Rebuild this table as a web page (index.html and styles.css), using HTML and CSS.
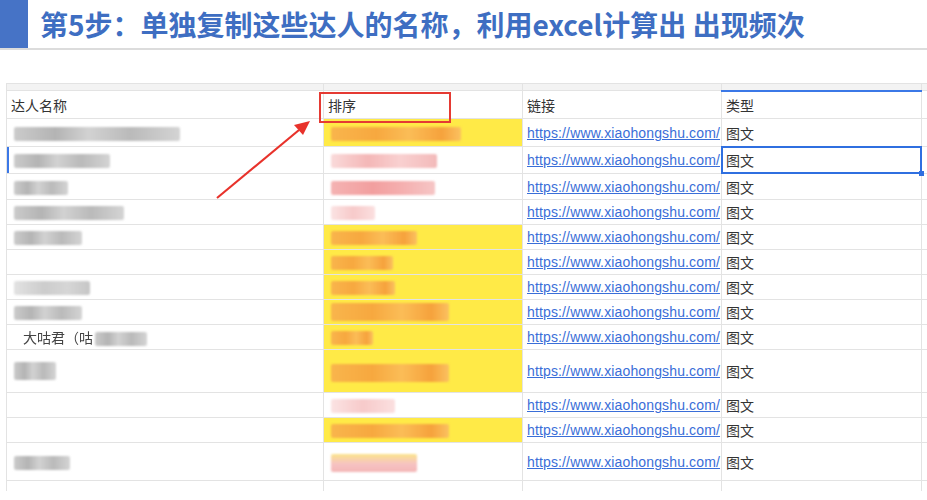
FILE: index.html
```html
<!DOCTYPE html>
<html lang="zh-CN">
<head>
  <meta charset="UTF-8" />
  <meta name="viewport" content="width=device-width, initial-scale=1.0" />
  <title>第5步：统计达人出现频次</title>
  <link rel="stylesheet" href="styles.css">
</head>
<body>
  <header class="title-bar">
    <div class="title-mark"></div>
    <h1 class="title">第5步：单独复制这些达人的名称，利用excel计算出 出现频次</h1>
  </header>

  <div class="sheet">
    <table class="grid">
      <colgroup>
        <col class="c-name"><col class="c-rank"><col class="c-link"><col class="c-type"><col class="c-rest">
      </colgroup>
      <tr class="strip"><td></td><td></td><td></td><td class="sel-col"></td><td></td></tr>
      <tr class="head">
        <td>达人名称</td>
        <td class="rank-head">排序<span class="mark-box"></span></td>
        <td>链接</td>
        <td>类型</td>
        <td></td>
      </tr>
      <tr class="r28">
        <td><span class="blot gray" style="width:166px"></span></td>
        <td class="hl"><span class="blot orange" style="width:130px"></span></td>
        <td class="link"><a href="#">https://www.xiaohongshu.com/</a></td>
        <td>图文</td><td></td>
      </tr>
      <tr class="r27">
        <td class="row-sel"><span class="blot gray" style="width:96px"></span></td>
        <td><span class="blot pink" style="width:106px"></span></td>
        <td class="link"><a href="#">https://www.xiaohongshu.com/</a></td>
        <td class="sel">图文</td><td></td>
      </tr>
      <tr class="r26">
        <td><span class="blot gray" style="width:54px"></span></td>
        <td><span class="blot rose" style="width:104px"></span></td>
        <td class="link"><a href="#">https://www.xiaohongshu.com/</a></td>
        <td>图文</td><td></td>
      </tr>
      <tr class="r25">
        <td><span class="blot gray" style="width:110px"></span></td>
        <td><span class="blot pale" style="width:44px"></span></td>
        <td class="link"><a href="#">https://www.xiaohongshu.com/</a></td>
        <td>图文</td><td></td>
      </tr>
      <tr class="r25">
        <td><span class="blot gray" style="width:68px"></span></td>
        <td class="hl"><span class="blot orange" style="width:86px"></span></td>
        <td class="link"><a href="#">https://www.xiaohongshu.com/</a></td>
        <td>图文</td><td></td>
      </tr>
      <tr class="r25">
        <td></td>
        <td class="hl"><span class="blot orange" style="width:62px"></span></td>
        <td class="link"><a href="#">https://www.xiaohongshu.com/</a></td>
        <td>图文</td><td></td>
      </tr>
      <tr class="r25">
        <td><span class="blot gray light" style="width:76px"></span></td>
        <td class="hl"><span class="blot orange" style="width:64px"></span></td>
        <td class="link"><a href="#">https://www.xiaohongshu.com/</a></td>
        <td>图文</td><td></td>
      </tr>
      <tr class="r25">
        <td><span class="blot gray" style="width:68px"></span></td>
        <td class="hl"><span class="blot orange tall" style="width:118px"></span></td>
        <td class="link"><a href="#">https://www.xiaohongshu.com/</a></td>
        <td>图文</td><td></td>
      </tr>
      <tr class="r25">
        <td><span class="name-text">大咕君（咕</span><span class="blot gray over" style="width:52px"></span></td>
        <td class="hl"><span class="blot orange" style="width:42px"></span></td>
        <td class="link"><a href="#">https://www.xiaohongshu.com/</a></td>
        <td>图文</td><td></td>
      </tr>
      <tr class="r43">
        <td><span class="blot gray tall" style="width:42px"></span></td>
        <td class="hl top"><span class="blot orange tall" style="width:118px"></span></td>
        <td class="link"><a href="#">https://www.xiaohongshu.com/</a></td>
        <td>图文</td><td></td>
      </tr>
      <tr class="r25">
        <td></td>
        <td><span class="blot pale" style="width:64px"></span></td>
        <td class="link"><a href="#">https://www.xiaohongshu.com/</a></td>
        <td>图文</td><td></td>
      </tr>
      <tr class="r25">
        <td></td>
        <td class="hl"><span class="blot orange" style="width:118px"></span></td>
        <td class="link"><a href="#">https://www.xiaohongshu.com/</a></td>
        <td>图文</td><td></td>
      </tr>
      <tr class="r38">
        <td><span class="blot gray" style="width:56px"></span></td>
        <td class="top"><span class="blot pink fade" style="width:86px"></span></td>
        <td class="link"><a href="#">https://www.xiaohongshu.com/</a></td>
        <td>图文</td><td></td>
      </tr>
      <tr class="tail"><td></td><td></td><td></td><td></td><td></td></tr>
    </table>
  </div>

  <svg class="arrow" width="927" height="500" viewBox="0 0 927 500">
    <line x1="217" y1="198" x2="299" y2="130" stroke="#e8322b" stroke-width="2.2" />
    <polygon points="310,121 303,135 294,125" fill="#e8322b" />
  </svg>
</body>
</html>
```

FILE: styles.css
```css
body {
  margin: 0;
  width: 927px;
  height: 500px;
  overflow: hidden;
  position: relative;
  background: #fff;
  font-family: 'Liberation Sans', 'Noto Sans CJK SC', sans-serif;
}

.title-bar {
  display: flex;
  height: 48px;
  border-bottom: 2px solid #dcdcdc;
}

.title-mark {
  width: 28px;
  background: #4673c6;
}

.title {
  margin: 0;
  padding-left: 12px;
  font-family: 'Noto Sans CJK SC', sans-serif;
  font-size: 28px;
  font-weight: bold;
  line-height: 48px;
  color: #3e6ec2;
  white-space: nowrap;
}

.sheet {
  padding: 33px 0 0 6px;
}

.grid {
  border-collapse: collapse;
  table-layout: fixed;
  width: 930px;
}

.c-name { width: 317px; }
.c-rank { width: 199px; }
.c-link { width: 199px; }
.c-type { width: 200px; }

.grid td {
  border: 1px solid #e3e3e3;
  padding: 0 4px;
  font-size: 14px;
  color: #333;
  white-space: nowrap;
  vertical-align: middle;
}

.strip td {
  background: #f3f3f3;
  padding: 0;
  font-size: 0;
}

.strip .sel-col {
  border-bottom: 2px solid #3b78e7;
}

.strip { height: 7px; }
.head { height: 28px; }
.r28 { height: 28px; }
.r27 { height: 27px; }
.r26 { height: 26px; }
.r25 { height: 25px; }
.r43 { height: 43px; }
.r38 { height: 38px; }
.tail { height: 10px; }

.tail td {
  border-bottom: none;
}

.rank-head {
  position: relative;
}

.mark-box {
  position: absolute;
  left: -5px;
  top: 1px;
  width: 128px;
  height: 27px;
  border: 2px solid #e53a33;
}

.hl {
  background: #ffea47;
}

.link {
  overflow: hidden;
  text-overflow: clip;
}

.link a {
  color: #3a6ed8;
  text-decoration: underline;
  letter-spacing: 0.14px;
}

.sel {
  position: relative;
}

.sel::after {
  content: '';
  position: absolute;
  left: -1px;
  top: -1px;
  right: -1px;
  bottom: -1px;
  border: 2px solid #2f6fe0;
}

.sel::before {
  content: '';
  position: absolute;
  right: -3px;
  bottom: -3px;
  width: 5px;
  height: 5px;
  background: #2f6fe0;
  z-index: 1;
}

.row-sel {
  box-shadow: inset 2px 0 0 #3b78e7;
}

.blot {
  display: inline-block;
  height: 14px;
  margin-left: 3px;
  vertical-align: middle;
  border-radius: 2px;
  filter: blur(1.2px);
}

.blot.tall {
  height: 18px;
}

.top {
  vertical-align: top;
}

.top .blot {
  margin-top: 3px;
}

.blot.gray {
  background: linear-gradient(90deg, #cbcbcb, #b4b4b4 25%, #d2d2d2 45%, #bababa 70%, #d4d4d4);
}

.blot.gray.light {
  background: linear-gradient(90deg, #e2e2e2, #cccccc 40%, #d6d6d6 70%, #c6c6c6);
}

.blot.over {
  margin-left: 2px;
}

.blot.orange {
  background: linear-gradient(90deg, #f9b54c, #f7a83f 35%, #fbbd57 60%, #f6a23c 85%, #fbc160);
}

.blot.pink {
  background: linear-gradient(90deg, #fadada, #f4b7b7 35%, #f9d0d0 65%, #f3baba);
}

.blot.rose {
  background: linear-gradient(90deg, #f5b3b3, #f29f9f 40%, #f5b0b0 70%, #f6c6c6);
}

.blot.pale {
  background: linear-gradient(90deg, #fbe3e3, #f7caca 50%, #fbe0e0);
}

.blot.fade {
  height: 18px;
  background: linear-gradient(180deg, #fbe48a, #f6c3c3 55%, #f4b6b6);
}

.name-text {
  display: inline-block;
  padding-left: 12px;
  color: #444;
  filter: blur(0.4px);
}

.arrow {
  position: absolute;
  left: 0;
  top: 0;
  pointer-events: none;
}
```
